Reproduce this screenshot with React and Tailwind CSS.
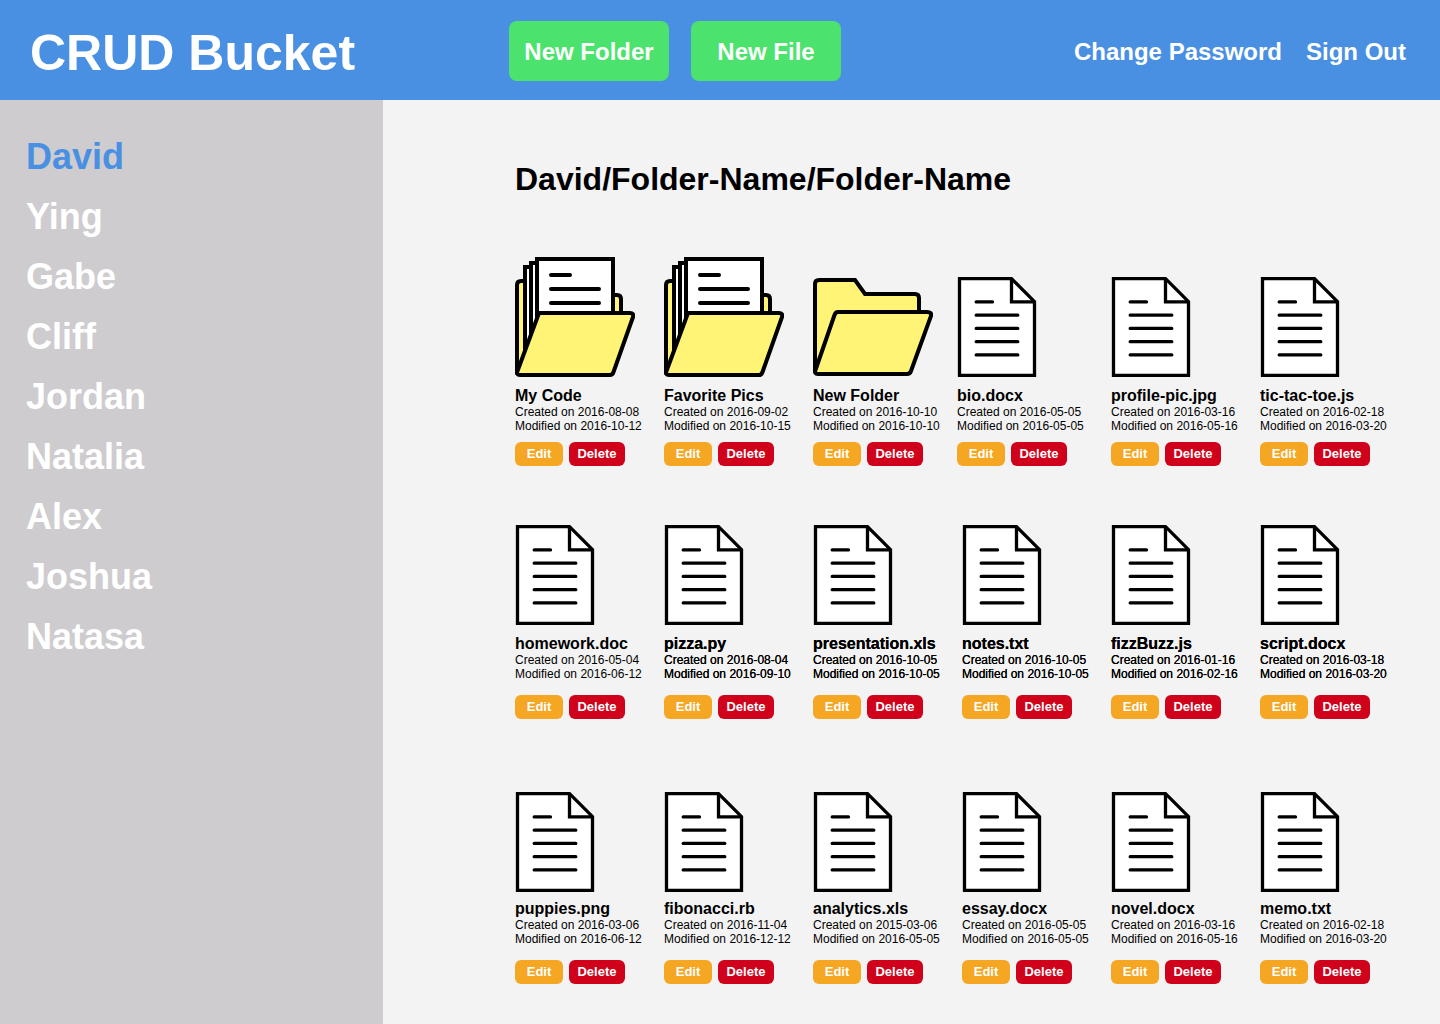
const people = ["David", "Ying", "Gabe", "Cliff", "Jordan", "Natalia", "Alex", "Joshua", "Natasa"];

const rows = [
  {
    className: "grid-cols-[149fr_149fr_144fr_154fr_149fr_149fr]",
    metaClass: "mt-[10px]",
    actionsClass: "mt-[9px]",
    items: [
      ["full", "My Code", "2016-08-08", "2016-10-12"],
      ["full", "Favorite Pics", "2016-09-02", "2016-10-15"],
      ["empty", "New Folder", "2016-10-10", "2016-10-10"],
      ["file", "bio.docx", "2016-05-05", "2016-05-05"],
      ["file", "profile-pic.jpg", "2016-03-16", "2016-05-16"],
      ["file", "tic-tac-toe.js", "2016-02-18", "2016-03-20"],
    ],
  },
  {
    className: "grid-cols-6 mt-[59px]",
    metaClass: "mt-[10px]",
    actionsClass: "mt-[14px]",
    items: [
      ["file", "homework.doc", "2016-05-04", "2016-06-12"],
      ["file", "pizza.py", "2016-08-04", "2016-09-10", true],
      ["file", "presentation.xls", "2016-10-05", "2016-10-05", true],
      ["file", "notes.txt", "2016-10-05", "2016-10-05", true],
      ["file", "fizzBuzz.js", "2016-01-16", "2016-02-16", true],
      ["file", "script.docx", "2016-03-18", "2016-03-20", true],
    ],
  },
  {
    className: "grid-cols-6 mt-[73px]",
    metaClass: "mt-2",
    actionsClass: "mt-[14px]",
    items: [
      ["file", "puppies.png", "2016-03-06", "2016-06-12"],
      ["file", "fibonacci.rb", "2016-11-04", "2016-12-12"],
      ["file", "analytics.xls", "2015-03-06", "2016-05-05"],
      ["file", "essay.docx", "2016-05-05", "2016-05-05"],
      ["file", "novel.docx", "2016-03-16", "2016-05-16"],
      ["file", "memo.txt", "2016-02-18", "2016-03-20"],
    ],
  },
];

function FileIcon() {
  return (
    <svg width="80" height="100" viewBox="0 0 80 100" fill="none" stroke="#000" strokeWidth="3.3" aria-hidden="true">
      <path d="M2.500 1.700H54.500L77.500 24.700V98.300H2.500Z" fill="#fff" />
      <path d="M54.500 1.700V24.900H77.500" />
      <path d="M19.200 24.900H35.500M19.200 38.200H60.800M19.200 51.400H60.800M19.200 64.700H60.800M19.200 77.900H60.800" strokeLinecap="round" />
    </svg>
  );
}

function FullFolderIcon() {
  return (
    <svg width="120" height="120" viewBox="0 0 120 120" stroke="#000" strokeWidth="4" strokeLinejoin="round" aria-hidden="true">
      <path d="M2 116V28Q2 24 6 24H40V38H102Q106 38 106 42V70L20 116Z" fill="#fff476" />
      <g fill="#fff" strokeLinejoin="miter">
        <path d="M10 92V10H30V58Z" />
        <path d="M16 74V6H36V58Z" />
        <path d="M22 60V2H98V60Z" />
      </g>
      <path d="M36 18H55M36 32H84M36 46H84" fill="none" strokeLinecap="round" />
      <path d="M24 56H115Q119 56 118 60L98.500 115Q97.500 118 95 118H5Q1 118 2.500 114Z" fill="#fff476" />
    </svg>
  );
}

function EmptyFolderIcon() {
  return (
    <svg width="120" height="99" viewBox="0 0 120 99" fill="#fff476" stroke="#000" strokeWidth="4" aria-hidden="true">
      <path d="M2 92V6Q2 2 6 2H42L52 16H102Q106 16 106 20V60L20 92Z" />
      <path d="M25 34H114Q119 34 118 38L98 93Q97 96 94 96H5Q1 96 2.500 92L21.500 37Q22.500 34 25 34Z" />
    </svg>
  );
}

const icons = { file: FileIcon, full: FullFolderIcon, empty: EmptyFolderIcon };

function Item({ item, metaClass, actionsClass }) {
  const [kind, name, created, modified, emphasized] = item;
  const Icon = icons[kind];
  return (
    <li className="flex flex-col items-start whitespace-nowrap">
      <Icon />
      <div className={`${metaClass} ${emphasized ? "[text-shadow:0_0_0_#000]" : ""}`}>
        <h2 className="text-base leading-[18px] font-bold">{name}</h2>
        <p className="text-xs leading-[14px]">Created on {created}</p>
        <p className="text-xs leading-[14px]">Modified on {modified}</p>
      </div>
      <div className={`flex gap-[6px] text-[13px] font-bold text-white ${actionsClass}`}>
        <button type="button" className="h-6 w-12 rounded-md bg-[#f5a623]">Edit</button>
        <button type="button" className="h-6 w-14 rounded-md bg-[#d0021b]">Delete</button>
      </div>
    </li>
  );
}

export default function App() {
  return (
    <div className="flex min-h-screen flex-col bg-[#f3f3f3] font-['Liberation_Sans',Arial,sans-serif] text-black">
      <header className="flex h-[100px] items-center bg-[#4a90e2] pt-[2px] pr-[34px] pl-[30px] font-bold whitespace-nowrap text-white">
        <h1 className="w-[479px] pt-[4px] text-[50px] leading-none">CRUD Bucket</h1>
        <div className="flex gap-[22px] text-2xl">
          <button type="button" className="h-[60px] w-40 rounded-lg bg-[#4be36d] pt-[2px]">New Folder</button>
          <button type="button" className="h-[60px] w-[150px] rounded-lg bg-[#4be36d] pt-[2px]">New File</button>
        </div>
        <nav className="ml-auto flex gap-6 pt-[2px] text-2xl">
          <a href="#password">Change Password</a>
          <a href="#signout">Sign Out</a>
        </nav>
      </header>
      <div className="flex flex-1">
        <aside className="w-[383px] shrink-0 bg-[#cecccf] px-[26px] pt-[27px]">
          <ul className="text-4xl font-bold text-white">
            {people.map((person, i) => (
              <li key={person} className="leading-[60px]">
                <a href={`#${person}`} className={i === 0 ? "text-[#4a90e2]" : ""}>{person}</a>
              </li>
            ))}
          </ul>
        </aside>
        <main className="min-w-0 flex-1 pt-[59px] pr-[31px] pb-10 pl-[132px]">
          <h1 className="text-[32px] leading-10 font-bold">David/Folder-Name/Folder-Name</h1>
          <div className="mt-[58px]">
            {rows.map((row) => (
              <ul key={row.items[0][1]} className={`grid items-end ${row.className}`}>
                {row.items.map((item) => (
                  <Item key={item[1]} item={item} metaClass={row.metaClass} actionsClass={row.actionsClass} />
                ))}
              </ul>
            ))}
          </div>
        </main>
      </div>
    </div>
  );
}
